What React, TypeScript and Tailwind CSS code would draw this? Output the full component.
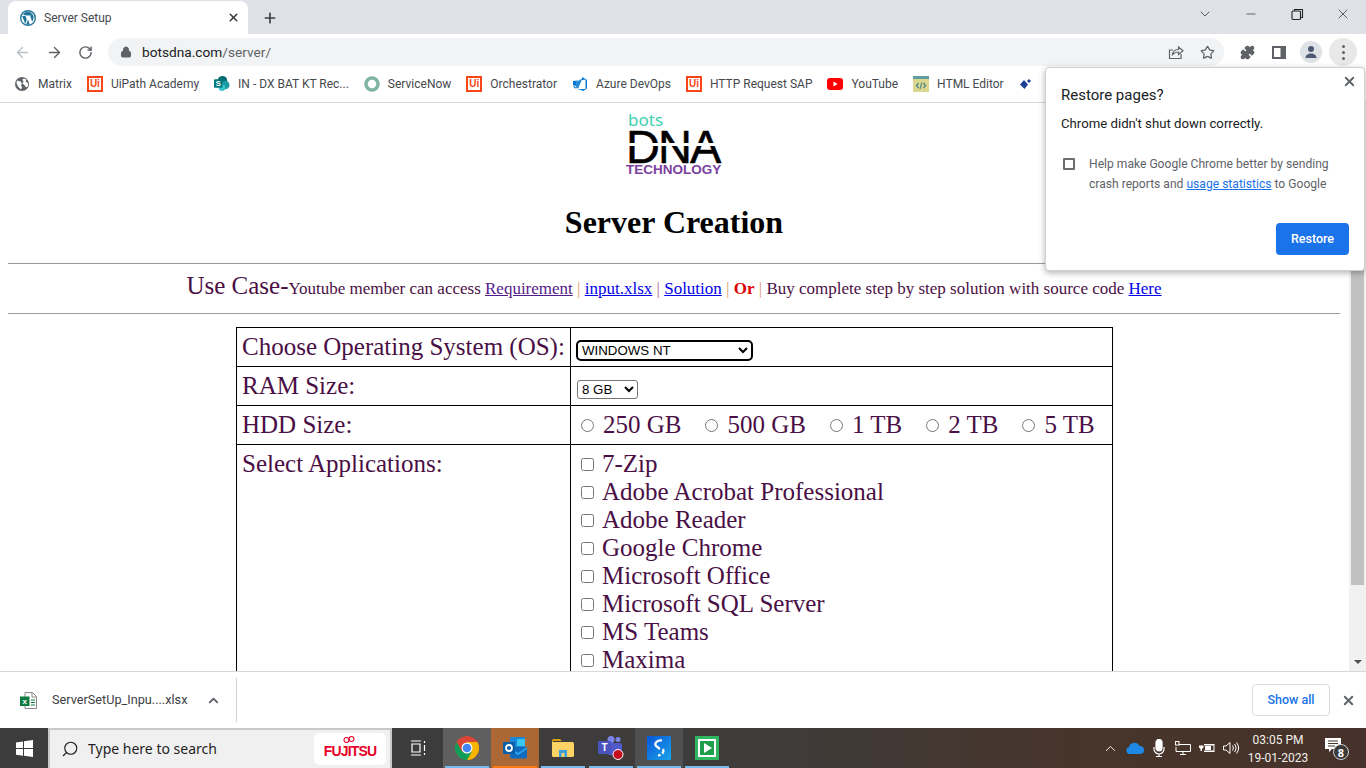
import {
  ArrowLeft,
  ArrowRight,
  RotateCw,
  Lock,
  Star,
  Puzzle,
  X,
  Plus,
  ChevronDown,
  ChevronUp,
  Minus,
  Search,
} from 'lucide-react';

const UI_FONT = "font-['Roboto',sans-serif]";

function UiPathIcon() {
  return (
    <span className="flex h-4 w-4 items-center justify-center border-2 border-[#fa4616] font-['Liberation_Sans',sans-serif] text-[10px] font-bold leading-none text-[#fa4616]">
      Ui
    </span>
  );
}

function WordpressIcon() {
  return (
    <svg width="16" height="16" viewBox="0 0 16 16">
      <circle cx="8" cy="8" r="8" fill="#21759b" />
      <circle cx="8" cy="8" r="6.6" fill="#fff" />
      <path d="M2.2 6l3 8 1.6-4.6L5.6 6H2.2zM6.2 5.4h5l-1 .7 2 6 1.4-4c.3-1.4-.3-2.6-.8-3.400C11.400 3 9.800 1.800 8 1.800 5.800 1.800 4 3 3 4.800l3.200.6zM8 9.500l-1.800 5c1.200.3 2.400.3 3.600-.1L8 9.500z" fill="#21759b" />
    </svg>
  );
}

function SharePointIcon() {
  return (
    <svg width="17" height="17" viewBox="0 0 17 17">
      <circle cx="9" cy="5.500" r="5" fill="#036c70" />
      <circle cx="12" cy="10" r="4.500" fill="#1a9ba1" />
      <circle cx="8.500" cy="13" r="3.500" fill="#37c6d0" />
      <rect x="0" y="4" width="9" height="9" rx="1" fill="#03787c" />
      <text x="4.500" y="11.500" textAnchor="middle" fontSize="8" fontWeight="700" fill="#fff" fontFamily="Liberation Sans">S</text>
    </svg>
  );
}

function GlobeIcon() {
  return (
    <svg width="14" height="14" viewBox="0 0 14 14">
      <circle cx="7" cy="7" r="7" fill="#5f6368" />
      <path d="M2 3.500l3.500 1 1.500 2-1 1.500 1 2.500-1 2L3 9.500 1.500 6zM9 1.500l2.500 1-1 2 2.500 1.500v3l-2 1.500-1.500-2.500-2-1.500 1-2-1-2z" fill="#fff" />
    </svg>
  );
}

function ServiceNowIcon() {
  return (
    <svg width="16" height="16" viewBox="0 0 16 16">
      <circle cx="8" cy="8" r="6" fill="none" stroke="#81b5a1" strokeWidth="3.500" />
    </svg>
  );
}

function AzureIcon() {
  return (
    <svg width="16" height="16" viewBox="0 0 16 16">
      <path d="M15 3.500v9L11.500 15 6 13h7.500V3L10 1v2L4 5.500V10l-3-1V5z" fill="#0078d4" />
      <path d="M4 10v2.500l2 .5 4-9.500-6 2zM1 9l5 4-4-1z" fill="#0078d4" opacity="0.85" />
    </svg>
  );
}

function YoutubeIcon() {
  return (
    <svg width="16" height="12" viewBox="0 0 16 12">
      <rect width="16" height="12" rx="3" fill="#ff0000" />
      <path d="M6.500 3.500v5l4-2.500z" fill="#fff" />
    </svg>
  );
}

function HtmlEditorIcon() {
  return (
    <svg width="16" height="16" viewBox="0 0 16 16">
      <rect width="16" height="16" fill="#dcd68f" />
      <rect width="16" height="3" fill="#5f9ea0" />
      <path d="M5.500 7L3.500 9.500l2 2.500M10.500 7l2 2.500-2 2.500" fill="none" stroke="#4a8a8c" strokeWidth="1.300" />
      <path d="M9 6.500l-2 6.500" stroke="#4a8a8c" strokeWidth="1.100" />
    </svg>
  );
}

function DiamondIcon() {
  return (
    <svg width="14" height="14" viewBox="0 0 14 14">
      <path d="M5 3l4 4.500L5.500 12 1 7.500z" fill="#1b3f94" />
      <path d="M8 4l2-2 2 2-2 2z" fill="#1b3f94" />
    </svg>
  );
}

function ExcelIcon() {
  return (
    <svg width="17" height="17" viewBox="0 0 17 17">
      <path d="M5 .500h7.500l4 4V16.500H5z" fill="#fff" stroke="#8a8a8a" />
      <path d="M12 .500v4.500h4.500" fill="none" stroke="#8a8a8a" />
      <path d="M11 8h4M11 10.500h4M11 13h4" stroke="#107c41" />
      <rect x="0" y="4.500" width="9.500" height="9.500" fill="#107c41" />
      <text x="4.750" y="12" textAnchor="middle" fontSize="8" fontWeight="700" fill="#fff" fontFamily="Liberation Sans">x</text>
    </svg>
  );
}

const bookmarks = [
  { icon: <GlobeIcon />, label: 'Matrix' },
  { icon: <UiPathIcon />, label: 'UiPath Academy' },
  { icon: <SharePointIcon />, label: 'IN - DX BAT KT Rec...' },
  { icon: <ServiceNowIcon />, label: 'ServiceNow' },
  { icon: <UiPathIcon />, label: 'Orchestrator' },
  { icon: <AzureIcon />, label: 'Azure DevOps' },
  { icon: <UiPathIcon />, label: 'HTTP Request SAP' },
  { icon: <YoutubeIcon />, label: 'YouTube' },
  { icon: <HtmlEditorIcon />, label: 'HTML Editor' },
];

const apps = [
  '7-Zip',
  'Adobe Acrobat Professional',
  'Adobe Reader',
  'Google Chrome',
  'Microsoft Office',
  'Microsoft SQL Server',
  'MS Teams',
  'Maxima',
];

const hddSizes = ['250 GB', '500 GB', '1 TB', '2 TB', '5 TB'];

function TabStrip() {
  return (
    <div className="flex h-[34px] shrink-0 items-end bg-[#dee1e6]">
      <div className={`ml-2 flex h-[33px] w-[240px] items-center rounded-t-lg bg-white pl-3 pr-2 text-[12px] text-[#45494e] ${UI_FONT}`}>
        <WordpressIcon />
        <span className="ml-2">Server Setup</span>
        <X className="ml-auto h-[13px] w-[13px] text-[#3c4043]" strokeWidth={3} />
      </div>
      <div className="ml-[14px] flex h-[33px] items-center">
        <Plus className="h-[16px] w-[16px] text-[#3c4043]" strokeWidth={2.500} />
      </div>
      <div className="ml-auto flex h-[33px] items-center pb-[7px] text-[#3c4043]">
        <ChevronDown className="h-[16px] w-[16px]" strokeWidth={1.300} />
        <Minus className="ml-[31px] h-[14px] w-[14px]" strokeWidth={1.300} />
        <svg className="ml-[33px]" width="13" height="13" viewBox="0 0 13 13" fill="none" stroke="#222" strokeWidth="1.100">
          <rect x="1" y="3" width="8.500" height="8.500" rx="1" />
          <path d="M3.500 3V1.500h8v8H9.500" />
        </svg>
        <X className="ml-[31px] mr-[15px] h-[16px] w-[16px]" strokeWidth={1.200} />
      </div>
    </div>
  );
}

function Toolbar() {
  return (
    <div className="flex h-[33px] shrink-0 items-center bg-white pl-[14px] pr-[9px] pt-[3px]">
      <ArrowLeft className="h-[17px] w-[17px] text-[#bcc0c4]" strokeWidth={2} />
      <ArrowRight className="ml-[15px] h-[17px] w-[17px] text-[#5f6368]" strokeWidth={2} />
      <RotateCw className="ml-[15px] h-[15px] w-[15px] text-[#5f6368]" strokeWidth={2.300} />
      <div className="ml-[15px] flex h-[28px] w-[1117px] items-center rounded-full bg-[#f1f3f4] pl-[12px] pr-[9px]">
        <Lock className="h-[12px] w-[12px] fill-[#5f6368] text-[#5f6368]" strokeWidth={2} />
        <span className={`ml-[10px] text-[13.700px] text-[#202124] ${UI_FONT}`}>
          botsdna.com<span className="text-[#5f6368]">/server/</span>
        </span>
        <svg className="ml-auto" width="16" height="15" viewBox="0 0 16 15" fill="none" stroke="#5f6368" strokeWidth="1.200">
          <path d="M13 9v4.500H1.500V5H5" />
          <path d="M4.500 9.500C5 6 7.500 4.500 10.500 4.500V2L15 5.800l-4.500 3.700V7C8 7 6 8 4.500 9.500z" />
        </svg>
        <Star className="ml-[16px] h-[15px] w-[15px] text-[#5f6368]" strokeWidth={2} />
      </div>
      <Puzzle className="ml-[16px] h-[15px] w-[15px] fill-[#5f6368] text-[#5f6368]" strokeWidth={2} />
      <svg className="ml-[17px]" width="14" height="13" viewBox="0 0 14 13">
        <path d="M0 0h14v13H0z" fill="#5f6368" />
        <path d="M2 2h6.500v9H2z" fill="#fff" />
      </svg>
      <div className="ml-[14px] flex h-[22px] w-[22px] items-center justify-center overflow-hidden rounded-full bg-[#dee1e6]">
        <svg width="14" height="14" viewBox="0 0 14 14" fill="#4d5a75">
          <circle cx="7" cy="4" r="3" />
          <path d="M1.500 13c0-3 2.500-4.500 5.500-4.500s5.500 1.500 5.500 4.500z" />
        </svg>
      </div>
      <div className="ml-[7px] flex h-[28px] w-[28px] flex-col items-center justify-center gap-[3px] rounded-full bg-[#e8e8e9]">
        <span className="h-[3px] w-[3px] rounded-full bg-[#5f6368]" />
        <span className="h-[3px] w-[3px] rounded-full bg-[#5f6368]" />
        <span className="h-[3px] w-[3px] rounded-full bg-[#5f6368]" />
      </div>
    </div>
  );
}

function BookmarksBar() {
  return (
    <div className={`flex h-[36px] shrink-0 items-center gap-[15px] overflow-hidden border-b border-[#d4d6d9] bg-white pb-[2px] pl-[14px] text-[12px] text-[#45494e] ${UI_FONT}`}>
      {bookmarks.map((b) => (
        <div key={b.label} className="flex items-center gap-[8px] whitespace-nowrap">
          <span className="flex w-[16px] justify-center">{b.icon}</span>
          <span>{b.label}</span>
        </div>
      ))}
      <DiamondIcon />
    </div>
  );
}

function Logo() {
  return (
    <div className="mx-auto flex h-[77px] w-[96px] flex-col items-start pt-[9px]">
      <div className="pl-[2px] font-['Noto_Sans',sans-serif] text-[17px] leading-[16px] text-[#3fcfb0]">bots</div>
      <div className="relative mt-[2px] h-[34px] w-[96px]">
        <div className="font-['Liberation_Sans',sans-serif] text-[47px] leading-[34px] tracking-[-2px] text-black [-webkit-text-stroke:0.5px_black]">DNA</div>
        <div className="absolute left-0 right-0 top-[13px] h-[3px] bg-white" />
      </div>
      <div className="font-['Liberation_Sans',sans-serif] text-[13.500px] font-bold leading-[12px] text-[#7b3fa0]">TECHNOLOGY</div>
    </div>
  );
}

function ServerPage() {
  return (
    <div className="min-w-0 flex-1 overflow-hidden pl-2 pr-[9px] font-['Liberation_Serif',serif] text-[#4a0f45]">
      <Logo />
      <h1 className="mt-[24px] text-center text-[32px] font-bold leading-[37px] text-black">Server Creation</h1>
      <div className="mt-[22px] h-px bg-[#9a9a9a]" />
      <p className="mt-[7px] h-[42px] text-center text-[17px] leading-[30px]">
        <span className="text-[25px]">Use Case-</span>Youtube member can access{' '}
        <a className="text-[#551a8b] underline">Requirement</a> <span className="text-[#e0a070]">|</span>{' '}
        <a className="text-[#0000ee] underline">input.xlsx</a> <span className="text-[#b06a90]">|</span>{' '}
        <a className="text-[#0000ee] underline">Solution</a> <span className="text-[#e0a070]">|</span>{' '}
        <b className="text-[#e00000]">Or</b> <span className="text-[#e0a070]">|</span> Buy complete step by step
        solution with source code <a className="text-[#0000ee] underline">Here</a>
      </p>
      <div className="h-px bg-[#9a9a9a]" />
      <table className="ml-[228px] mt-[13px] w-[877px] border-collapse text-[25px] leading-[28px]">
        <tbody>
          <tr className="h-[39px]">
            <td className="w-[334px] border border-black px-[5px] align-middle whitespace-nowrap">Choose Operating System (OS):</td>
            <td className="border border-black px-[5px] align-middle">
              <select className="mt-[6px] ml-[2px] block h-[17px] w-[173px] rounded-[3px] bg-white font-['Liberation_Sans',sans-serif] text-[13.300px] leading-none text-black outline-2 outline-black">
                <option>WINDOWS NT</option>
              </select>
            </td>
          </tr>
          <tr className="h-[39px]">
            <td className="border border-black px-[5px]">RAM Size:</td>
            <td className="border border-black px-[5px]">
              <select className="mt-[6px] ml-[1px] block h-[19px] w-[61px] rounded-[3px] border border-[#767676] bg-white font-['Liberation_Sans',sans-serif] text-[13.300px] leading-none text-black">
                <option>8 GB</option>
              </select>
            </td>
          </tr>
          <tr className="h-[39px]">
            <td className="border border-black px-[5px]">HDD Size:</td>
            <td className="border border-black px-[5px]">
              <div className="flex items-center gap-[24px] pl-[5px]">
                {hddSizes.map((s) => (
                  <label key={s} className="flex items-center gap-[9px] whitespace-nowrap">
                    <input type="radio" name="hdd" className="h-[13px] w-[13px]" />
                    <span>{s}</span>
                  </label>
                ))}
              </div>
            </td>
          </tr>
          <tr>
            <td className="border border-black px-[5px] pt-[5px] align-top">Select Applications:</td>
            <td className="border border-black px-[5px] pt-[5px] align-top">
              <div className="pl-[5px]">
                {apps.map((a) => (
                  <label key={a} className="flex h-[28px] items-center gap-[8px] whitespace-nowrap">
                    <input type="checkbox" className="h-[13px] w-[13px]" />
                    <span>{a}</span>
                  </label>
                ))}
                <div className="h-[40px]" />
              </div>
            </td>
          </tr>
        </tbody>
      </table>
    </div>
  );
}

function Scrollbar() {
  return (
    <div className="flex w-[17px] shrink-0 flex-col bg-[#f1f1f1] pl-[2px] pr-[2px]">
      <div className="mt-[17px] h-[465px] bg-[#c1c1c1]" />
      <div className="mt-auto mb-[7px] flex justify-center">
        <span className="h-0 w-0 border-x-[4px] border-t-[4px] border-x-transparent border-t-[#505050]" />
      </div>
    </div>
  );
}

function RestorePopup() {
  return (
    <div className={`absolute left-[1045px] top-[67px] h-[204px] w-[320px] rounded-[4px] border border-[#d0d0d0] bg-white pl-[15px] pr-[15px] pt-[16px] shadow-[0_2px_6px_rgba(0,0,0,0.3)] ${UI_FONT}`}>
      <X className="absolute right-[7px] top-[6px] h-[15px] w-[15px] text-[#5f6368]" strokeWidth={3} />
      <div className="text-[15px] leading-[22px] text-[#202124]">Restore pages?</div>
      <div className="mt-[9px] text-[13.200px] leading-[18px] text-[#202124]">Chrome didn't shut down correctly.</div>
      <div className="mt-[21px] ml-[2px] flex items-start">
        <span className="mt-[4px] h-[12px] w-[12px] shrink-0 rounded-[1px] border-2 border-[#6e6e6e]" />
        <p className="ml-[14px] whitespace-nowrap text-[12.100px] leading-[20px] text-[#5f6368]">
          Help make Google Chrome better by sending
          <br />
          crash reports and <span className="text-[#1a73e8] underline">usage statistics</span> to Google
        </p>
      </div>
      <button className="absolute right-[15px] top-[155px] h-[32px] w-[73px] rounded-[4px] bg-[#1a73e8] text-[12.500px] font-medium text-white">
        Restore
      </button>
    </div>
  );
}

function DownloadBar() {
  return (
    <div className={`flex h-[57px] shrink-0 items-center border-t border-[#d8d8d8] bg-white text-[12.700px] text-[#3c4043] ${UI_FONT}`}>
      <div className="ml-[20px] flex items-center">
        <ExcelIcon />
      </div>
      <span className="ml-[15px] w-[136px] whitespace-nowrap">ServerSetUp_Inpu....xlsx</span>
      <ChevronUp className="ml-[18px] h-[15px] w-[15px] text-[#5f6368]" strokeWidth={3} />
      <div className="ml-[15px] h-[44px] w-px bg-[#d0d0d0]" />
      <button className="ml-auto h-[32px] w-[78px] rounded-[4px] border border-[#dadce0] text-[12.500px] font-medium text-[#1a73e8]">
        Show all
      </button>
      <X className="ml-[11px] mr-[10px] h-[15px] w-[15px] text-[#5f6368]" strokeWidth={3} />
    </div>
  );
}

function FujitsuBox() {
  return (
    <div className="relative ml-auto mr-[4px] flex h-[32px] w-[72px] items-end justify-center rounded-[5px] bg-white pb-[6px] font-['Liberation_Sans',sans-serif] text-[14px] font-bold leading-[16px] tracking-[-0.8px] text-[#e60027]">
      FUJITSU
      <svg className="absolute left-[29px] top-[3px]" width="12" height="7" viewBox="0 0 12 7" fill="none" stroke="#e60027" strokeWidth="1.100">
        <circle cx="3.500" cy="4" r="2.500" />
        <circle cx="8.500" cy="3" r="2.500" />
      </svg>
    </div>
  );
}

function TaskButton({ className, bar, children }: { className?: string; bar?: string; children: React.ReactNode }) {
  return (
    <div className={`relative flex h-[40px] w-[48px] items-center justify-center ${className ?? ''}`}>
      {children}
      {bar && <span className={`absolute bottom-0 left-[2px] right-[2px] h-[2px] ${bar}`} />}
    </div>
  );
}

function Taskbar() {
  return (
    <div className="flex h-[40px] shrink-0 items-center bg-[linear-gradient(90deg,#3c3c3c_0%,#3e3c3b_55%,#47342a_80%,#46322a_100%)] font-['Noto_Sans',sans-serif] text-white">
      <div className="flex h-[40px] w-[48px] items-center justify-center">
        <svg width="17" height="17" viewBox="0 0 17 17" fill="#fff">
          <path d="M0 2.400l7-1v6.700H0zM8 1.200L17 0v8.100H8zM0 9h7v6.700l-7-1zM8 9h9v8l-9-1.200z" />
        </svg>
      </div>
      <div className="flex h-[40px] w-[344px] items-center border-2 border-b-0 border-[#c9c9c9] bg-[#f0f0f0] pb-[1px] pl-[11px] text-[#1f1f1f]">
        <Search className="h-[18px] w-[18px] -scale-x-100" strokeWidth={1.500} />
        <span className="ml-[9px] text-[14px]">Type here to search</span>
        <FujitsuBox />
      </div>
      <div className="flex h-[40px] w-[51px] items-center justify-center">
        <svg width="16" height="16" viewBox="0 0 16 16" fill="none" stroke="#fff" strokeWidth="1.200">
          <path d="M1 1h10M1 15h10M2 4h8v8H2zM14.500 1v2M14.500 5v6M14.500 13v2" />
        </svg>
      </div>
      <TaskButton className="bg-[#5f5f5f]" bar="bg-[#76b9ed]">
        <svg width="24" height="24" viewBox="0 0 24 24">
          <circle cx="12" cy="12" r="12" fill="#db4437" />
          <path d="M12 24a12 12 0 0 0 10.400-18H12z" fill="#f4b400" />
          <path d="M1.600 6A12 12 0 0 0 12 24l5-8.500H7z" fill="#0f9d58" />
          <circle cx="12" cy="12" r="5.500" fill="#fff" />
          <circle cx="12" cy="12" r="4.300" fill="#4285f4" />
        </svg>
      </TaskButton>
      <TaskButton className="bg-[#ab6835]" bar="bg-[#ff7a12]">
        <svg width="24" height="24" viewBox="0 0 24 24">
          <rect x="7" y="1" width="15" height="12" rx="1" fill="#1a86d8" />
          <rect x="14" y="3" width="8" height="7" fill="#37c6f0" />
          <path d="M7 11h17v10a1.500 1.500 0 0 1-1.500 1.500H8.500A1.500 1.500 0 0 1 7 21z" fill="#0f6cbd" />
          <path d="M7 12l8 5 9-6v2l-9 6-8-5z" fill="#2ea3f2" />
          <rect x="0" y="6" width="12" height="12" rx="1" fill="#0a5ea8" />
          <circle cx="6" cy="12" r="3" fill="none" stroke="#fff" strokeWidth="1.800" />
        </svg>
      </TaskButton>
      <TaskButton bar="bg-[#76b9ed]">
        <svg width="22" height="18" viewBox="0 0 22 18">
          <path d="M0 1.500A1.500 1.500 0 0 1 1.500 0H8l2 2h-9v2H0z" fill="#d99e0b" />
          <path d="M0 3h20.500A1.500 1.500 0 0 1 22 4.500v12a1.500 1.500 0 0 1-1.500 1.500h-19A1.500 1.500 0 0 1 0 16.500z" fill="#fcd364" />
          <path d="M7 11h8v7h-2.500v-4h-3v4H7z" fill="#3a9fdc" />
        </svg>
      </TaskButton>
      <TaskButton bar="bg-[#76b9ed]">
        <svg width="26" height="24" viewBox="0 0 26 24">
          <circle cx="20" cy="3.500" r="2.500" fill="#7b83eb" />
          <circle cx="13" cy="3.500" r="3.500" fill="#7b83eb" />
          <rect x="9" y="7" width="15" height="12" rx="2" fill="#5059c9" />
          <rect x="0" y="5" width="13" height="13" rx="1" fill="#4b53bc" />
          <text x="6.500" y="15" textAnchor="middle" fontSize="10" fontWeight="700" fill="#fff" fontFamily="Liberation Sans">T</text>
          <circle cx="20" cy="18.500" r="5" fill="#c50f1f" stroke="#fff" strokeWidth="1" />
        </svg>
      </TaskButton>
      <TaskButton className="bg-[#505050]" bar="bg-[#76b9ed]">
        <div className="flex h-[24px] w-[24px] items-center justify-center bg-[linear-gradient(135deg,#0a57d8,#1aa3e8)]">
          <svg width="14" height="20" viewBox="0 0 14 20" fill="none" stroke="#fff" strokeWidth="2.200">
            <path d="M10 2.500C5 2 2 5 4 8l4 3" />
            <path d="M11 11c1.500 3-1 6-5 6.500" strokeDasharray="5 2" />
          </svg>
        </div>
      </TaskButton>
      <TaskButton bar="bg-[#76b9ed]">
        <div className="flex h-[24px] w-[24px] items-center justify-center bg-[#2fb55d]">
          <div className="flex h-[18px] w-[18px] items-center justify-center border-2 border-white bg-[#1e9e4a]">
            <span className="ml-[2px] h-0 w-0 border-y-[5px] border-l-[8px] border-y-transparent border-l-white" />
          </div>
        </div>
      </TaskButton>
      <div className="ml-auto flex items-center">
        <ChevronUp className="h-[17px] w-[17px]" strokeWidth={1.300} />
        <svg className="ml-[7px]" width="18" height="12" viewBox="0 0 18 12" fill="#1e88e5">
          <path d="M3.500 12A3.500 3.500 0 0 1 3 5.100 5.500 5.500 0 0 1 13.400 4 4 4 0 0 1 14.500 12z" />
        </svg>
        <svg className="ml-[9px]" width="12" height="18" viewBox="0 0 12 18" fill="none" stroke="#fff" strokeWidth="1.200">
          <rect x="3" y="0.500" width="6" height="11.500" rx="3" fill="#fff" />
          <path d="M1 8v2a5 5 0 0 0 10 0V8M6 15v2.500M3 17.500h6" />
        </svg>
        <svg className="ml-[10px]" width="16" height="14" viewBox="0 0 16 14" fill="none" stroke="#fff" strokeWidth="1">
          <path d="M4 3.500h11.500v7H1V6M8 10.500V13M5 13.500h6" />
          <rect x="0.500" y="0.500" width="3.500" height="3.500" />
        </svg>
        <svg className="ml-[8px]" width="16" height="12" viewBox="0 0 16 12" fill="#fff">
          <path d="M5 2h10.500v8H5V8.500h9.500v-5H5z" />
          <rect x="6" y="4" width="6" height="4" />
          <path d="M1 1.500v2M3.500 1.500v2M0 3.500h4.500v2L3 7v2H1.500V7L0 5.500z" />
        </svg>
        <svg className="ml-[8px]" width="16" height="14" viewBox="0 0 16 14" fill="none" stroke="#fff" strokeWidth="1">
          <path d="M.5 5v4H3l4 3.500v-11L3 5z" />
          <path d="M9.500 4.500a4 4 0 0 1 0 5M11.500 3a6.500 6.500 0 0 1 0 8M13.500 1.500a9 9 0 0 1 0 11" />
        </svg>
        <div className="ml-[4px] w-[70px] whitespace-nowrap pt-[1px] text-center font-['Roboto',sans-serif] text-[12px] leading-[18px] text-[#f2efec]">
          <div>03:05 PM</div>
          <div>19-01-2023</div>
        </div>
        <div className="relative ml-[12px] mr-[23px] h-[20px] w-[18px]">
          <svg width="16" height="15" viewBox="0 0 16 15" fill="#fff">
            <path d="M0 0h16v11H7l-3 3v-3H0z" />
            <path d="M3 3h10M3 5.500h10M3 8h7" stroke="#47342a" strokeWidth="1" />
          </svg>
          <span className="absolute left-[8px] top-[6px] flex h-[16px] w-[16px] items-center justify-center rounded-full border border-[#d0d0d0] bg-[#3a3a3a] text-[11px] font-bold leading-none">
            8
          </span>
        </div>
      </div>
    </div>
  );
}

export default function App() {
  return (
    <div className="relative flex h-[768px] w-[1366px] flex-col overflow-hidden bg-white">
      <TabStrip />
      <Toolbar />
      <BookmarksBar />
      <div className="flex min-h-0 flex-1">
        <ServerPage />
        <Scrollbar />
      </div>
      <DownloadBar />
      <Taskbar />
      <RestorePopup />
    </div>
  );
}
